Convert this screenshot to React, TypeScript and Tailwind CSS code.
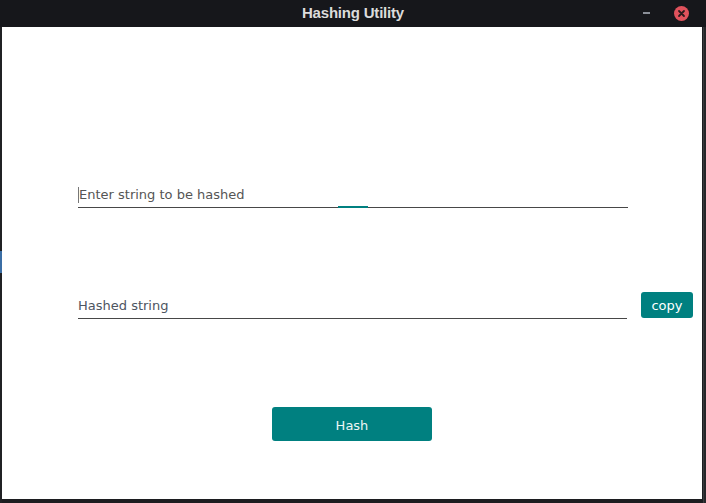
import React from "react";

export default function App() {
  return (
    <div className="w-[706px] h-[503px] bg-[#1c1d20] flex flex-col overflow-hidden" style={{ fontFamily: '"DejaVu Sans", sans-serif' }}>
      {/* title bar */}
      <div className="h-[27px] bg-[#16171b] flex items-center relative shrink-0">
        <div className="flex-1 text-center text-[15px] font-bold text-[#dcdcdc] tracking-[-0.2px]" style={{ fontFamily: '"Liberation Sans", sans-serif' }}>
          Hashing Utility
        </div>
        <div className="absolute left-[643px] top-[12px] w-[7px] h-[2px] bg-[#8a8f98]" />
        <div className="absolute left-[674px] top-[6px] w-[15px] h-[15px] rounded-full bg-[#e0525c] flex items-center justify-center">
          <svg width="9" height="9" viewBox="0 0 9 9">
            <path d="M2 2 L7 7 M7 2 L2 7" stroke="#2a1a1c" strokeWidth="1.8" strokeLinecap="round" />
          </svg>
        </div>
      </div>
      {/* body */}
      <div className="flex flex-1">
        <div className="w-[2px] bg-[#202124] relative">
          <div className="absolute left-0 top-[224px] w-[2px] h-[22px] bg-[#3b6ea5]" />
        </div>
        <div className="w-[700px] h-[472px] bg-white flex flex-col pt-[155px]">
          {/* input 1 */}
          <div className="ml-[76px] w-[550px] h-[26px] border-b border-[#474747] relative flex items-center">
            <div className="w-px h-[16px] bg-[#777] mr-0" />
            <span className="text-[13px] text-[#555555] leading-none">Enter string to be hashed</span>
            <div className="absolute left-[260px] bottom-[-1px] w-[30px] h-[2px] bg-[#008080]" />
          </div>
          {/* input 2 row */}
          <div className="mt-[84px] ml-[76px] flex items-start">
            <div className="mt-px w-[549px] h-[26px] border-b border-[#474747] flex items-center">
              <span className="text-[13px] text-[#4d5561] leading-none">Hashed string</span>
            </div>
            <button className="ml-[14px] w-[52px] h-[26px] rounded-[3px] bg-[#008080] text-white text-[13px] flex items-center justify-center leading-none">
              copy
            </button>
          </div>
          {/* hash button */}
          <div className="mt-[88px] flex justify-center">
            <button className="w-[160px] h-[34px] pt-[2px] rounded-[3px] bg-[#008080] text-[#eef6f6] text-[13px] flex items-center justify-center leading-none">
              Hash
            </button>
          </div>
        </div>
        <div className="w-[4px] bg-[#26272a] flex">
          <div className="w-px bg-[#1c1d20]" />
          <div className="w-px bg-[#3a3b3e]" />
        </div>
      </div>
    </div>
  );
}
